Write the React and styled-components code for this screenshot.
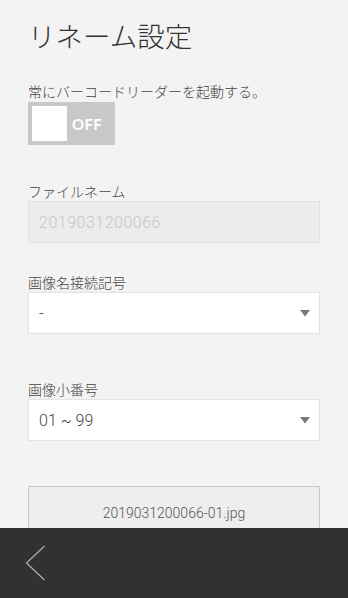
import React from "react";
import styled, { createGlobalStyle } from "styled-components";

const GlobalStyle = createGlobalStyle`
  html, body {
    margin: 0;
    padding: 0;
    height: 100%;
    background: #f3f3f3;
  }
  body {
    font-family: Roboto, "Noto Sans CJK JP", sans-serif;
    font-weight: 300;
    color: #444;
  }
  * {
    box-sizing: border-box;
  }
`;

const Page = styled.div`
  min-height: 100vh;
  background: #f3f3f3;
`;

const Content = styled.main`
  padding: 17px 28px 0;
  display: flex;
  flex-direction: column;
`;

const Title = styled.h1`
  margin: 0;
  font-family: "Noto Sans CJK JP", sans-serif;
  font-size: 27.5px;
  font-weight: 300;
  line-height: 36px;
  color: #333;
`;

const Field = styled.section`
  display: flex;
  flex-direction: column;
  margin-top: ${(p) => p.$gap}px;
`;

const Label = styled.label`
  font-family: "Noto Sans CJK JP", sans-serif;
  font-weight: 300;
  font-size: 14px;
  line-height: 20px;
  color: #444;
  margin-bottom: ${(p) => p.$space || 0}px;
`;

const Toggle = styled.div`
  width: 87px;
  height: 43px;
  padding: 4px;
  background: #c8c8c8;
  display: flex;
  align-items: center;
  gap: 5px;
`;

const Thumb = styled.span`
  width: 35px;
  height: 35px;
  background: #fff;
`;

const ToggleText = styled.span`
  font-family: Lato, sans-serif;
  font-weight: 700;
  font-size: 15px;
  color: #fff;
  letter-spacing: 0.3px;
`;

const TextBox = styled.div`
  height: 42px;
  border: 1px solid #e0e0e0;
  background: #ececec;
  display: flex;
  align-items: center;
  padding: 0 10px;
  font-size: 16px;
  letter-spacing: 0.5px;
  color: #c6c6c6;
`;

const SelectBox = styled.div`
  height: 42px;
  border: 1px solid #e3e3e3;
  background: #fff;
  display: flex;
  align-items: center;
  justify-content: space-between;
  padding: 0 9px 0 10px;
  font-size: 16px;
  color: #444;
`;

const Preview = styled.div`
  margin-top: 45px;
  height: 60px;
  border: 1px solid #c9c9c9;
  background: #eeeeee;
  display: flex;
  justify-content: center;
  padding-top: 18px;
  font-size: 14px;
  color: #555;
`;

const Footer = styled.footer`
  position: fixed;
  left: 0;
  right: 0;
  bottom: 0;
  height: 70px;
  background: #2f3231;
  display: flex;
  align-items: center;
  padding-left: 25px;
`;

const Arrow = () => (
  <svg width="10" height="7" viewBox="0 0 10 7">
    <path d="M0 0 H10 L5 6.5 Z" fill="#777" />
  </svg>
);

const Select = ({ value }) => (
  <SelectBox>
    <span>{value}</span>
    <Arrow />
  </SelectBox>
);

export default function App() {
  return (
    <Page>
      <GlobalStyle />
      <Content>
        <Title>リネーム設定</Title>

        <Field $gap={28}>
          <Label $space={1}>常にバーコードリーダーを起動する。</Label>
          <Toggle>
            <Thumb />
            <ToggleText>OFF</ToggleText>
          </Toggle>
        </Field>

        <Field $gap={36}>
          <Label>ファイルネーム</Label>
          <TextBox>2019031200066</TextBox>
        </Field>

        <Field $gap={29}>
          <Label>画像名接続記号</Label>
          <Select value="-" />
        </Field>

        <Field $gap={45}>
          <Label>画像小番号</Label>
          <Select value="01 ~ 99" />
        </Field>

        <Preview>2019031200066-01.jpg</Preview>
      </Content>

      <Footer>
        <svg width="22" height="38" viewBox="0 0 22 38">
          <polyline
            points="19.5,2 1.5,19 19.5,36"
            fill="none"
            stroke="#a9aaa9"
            strokeWidth="1.3"
          />
        </svg>
      </Footer>
    </Page>
  );
}
